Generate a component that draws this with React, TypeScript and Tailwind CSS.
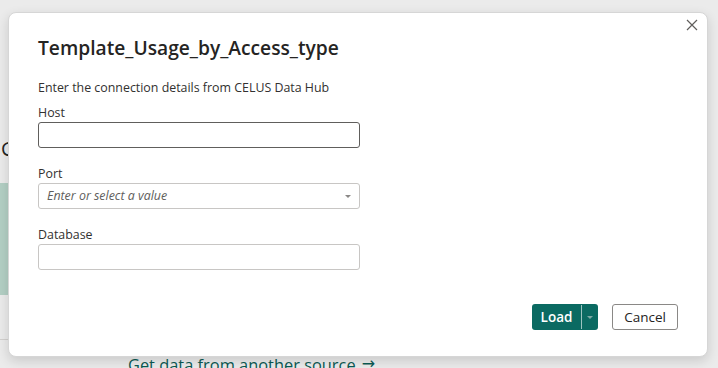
import React from "react";

function Field({ label, children }: { label: string; children: React.ReactNode }) {
  return (
    <div className="flex flex-col">
      <label className="text-[12.4px] leading-[16px] text-[#323130] mb-[1px]">{label}</label>
      {children}
    </div>
  );
}

export default function App() {
  return (
    <div
      className="relative w-[718px] h-[368px] overflow-hidden bg-[#ebebeb]"
      style={{ fontFamily: '"Open Sans", "Noto Sans", sans-serif' }}
    >
      {/* page behind the dialog */}
      <div className="absolute left-0 top-0 w-[718px] h-[368px]">
        <div className="absolute left-[1px] top-[134px] text-[20px] text-[#252423]">G</div>
        <div className="absolute left-0 top-[183px] w-[60px] h-[112px] bg-[#b3cfc4]" />
        <div className="absolute left-0 top-[339px] w-[60px] h-px bg-[#d2d0ce]" />
        <div className="absolute left-[128px] top-[353px] flex items-center gap-[6px] text-[16.4px] leading-[24px] text-[#0b5a53] whitespace-nowrap">
          <span>Get data from another source</span>
          <span className="text-[16px] leading-[16px] font-['DejaVu_Sans',sans-serif] -mt-[2px]">→</span>
        </div>
      </div>

      {/* dialog */}
      <div className="absolute left-[8px] top-[12px] w-[700px] h-[345px] bg-white rounded-[8px] border border-[#d6d6d6] shadow-[0_4px_12px_rgba(0,0,0,0.14)]">
        <button className="absolute left-[676px] top-[5px] w-[14px] h-[14px] flex items-center justify-center">
          <svg width="12" height="12" viewBox="0 0 12 12">
            <path d="M1 1L11 11M11 1L1 11" stroke="#605e5c" strokeWidth="1.2" />
          </svg>
        </button>

        <div className="pl-[29px] pt-[21px] w-[352px]">
          <h1 className="text-[19.2px] leading-[28px] font-semibold text-[#252423]">
            Template_Usage_by_Access_type
          </h1>
          <p className="mt-[18px] text-[12.4px] leading-[16px] text-[#323130] whitespace-nowrap">
            Enter the connection details from CELUS Data Hub
          </p>

          <div className="mt-[9px] flex flex-col gap-[18px]">
            <Field label="Host">
              <div className="h-[26px] w-[322px] rounded-[3px] border border-[#605e5c] bg-white" />
            </Field>
            <Field label="Port">
              <div className="h-[26px] w-[322px] rounded-[3px] border border-[#c8c6c4] bg-white flex items-center justify-between pl-[8px] pr-[8px]">
                <span className="text-[12.4px] italic text-[#605e5c]">Enter or select a value</span>
                <svg width="6" height="3" viewBox="0 0 6 3">
                  <path d="M0 0h6L3 3z" fill="#8a8886" />
                </svg>
              </div>
            </Field>
            <Field label="Database">
              <div className="h-[26px] w-[322px] rounded-[3px] border border-[#c8c6c4] bg-white" />
            </Field>
          </div>
        </div>

        <div className="absolute right-[29px] bottom-[26px] flex items-center gap-[14px]">
          <div className="flex h-[26px] rounded-[3px] overflow-hidden bg-[#0b6a62]">
            <button className="w-[49px] text-[13.5px] font-semibold text-white">Load</button>
            <div className="w-px bg-white/60 my-[1px]" />
            <button className="w-[16px] flex items-center justify-center">
              <svg width="6" height="3" viewBox="0 0 6 3">
                <path d="M0 0h6L3 3z" fill="#7fa9a5" />
              </svg>
            </button>
          </div>
          <button className="h-[26px] w-[66px] rounded-[3px] border border-[#8a8886] bg-white text-[13.5px] text-[#252423]">
            Cancel
          </button>
        </div>
      </div>
    </div>
  );
}
